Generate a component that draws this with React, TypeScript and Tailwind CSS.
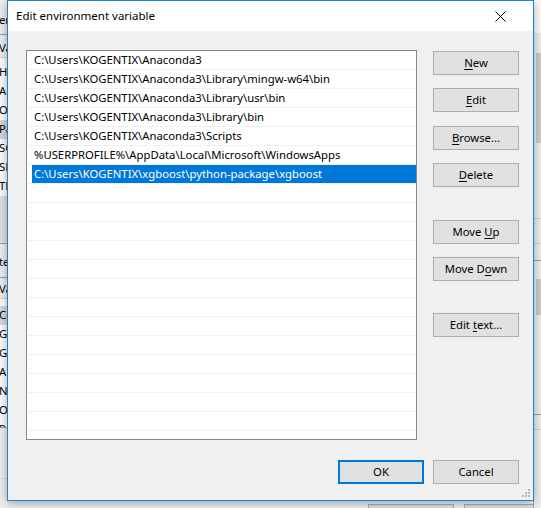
import React from 'react';

const paths = [
  'C:\\Users\\KOGENTIX\\Anaconda3',
  'C:\\Users\\KOGENTIX\\Anaconda3\\Library\\mingw-w64\\bin',
  'C:\\Users\\KOGENTIX\\Anaconda3\\Library\\usr\\bin',
  'C:\\Users\\KOGENTIX\\Anaconda3\\Library\\bin',
  'C:\\Users\\KOGENTIX\\Anaconda3\\Scripts',
  '%USERPROFILE%\\AppData\\Local\\Microsoft\\WindowsApps',
  'C:\\Users\\KOGENTIX\\xgboost\\python-package\\xgboost',
];
const selected = 6;
const rowCount = 21;

// variables listed in the window behind the dialog
const userVars = ['HADOOP_HOME', 'ANACONDA', 'OneDrive', 'Path', 'SCALA_HOME', 'SPARK_HOME', 'TEMP'];
const systemVars = ['ComSpec', 'GIT_HOME', 'GRADLE_HOME', 'ANT_HOME', 'NUMBER_OF_PROCESSORS', 'OS', 'Path'];

const Btn = ({ children, className = '' }: { children: React.ReactNode; className?: string }) => (
  <button
    className={`h-[24px] w-[86px] shrink-0 border bg-[#e1e1e1] leading-none text-black ${className}`}
  >
    {children}
  </button>
);

const Key = ({ children }: { children: React.ReactNode }) => (
  <span className="underline underline-offset-[2px]">{children}</span>
);

const App = () => {
  return (
    <div className="relative h-[508px] w-[541px] overflow-hidden bg-[#f0f0f0] font-['Noto_Sans',sans-serif] text-[11.3px] text-black">
      {/* Environment Variables window behind */}
      <div className="flex h-full">
        <div className="flex w-[7px] shrink-0 flex-col overflow-hidden whitespace-nowrap">
          <div className="ml-[-1px] h-[34px] shrink-0 pt-[12px]">er</div>
          <div className="h-px shrink-0 bg-[#a0a0a0]" />
          <div className="ml-[-1px] h-[23px] shrink-0 border-b border-[#d5d5d5] pt-[5px]">Variable</div>
          <div className="h-[5px] shrink-0 bg-white" />
          <div className="bg-white">
            {userVars.map((v, i) => (
              <div key={v} className={`ml-[-1px] h-[19px] pt-[1px] ${i === 3 ? 'bg-[#d9d9d9]' : ''}`}>{v}</div>
            ))}
          </div>
          <div className="h-[47px] shrink-0 bg-[#e3e3e3]" />
          <div className="h-px shrink-0 bg-[#a0a0a0]" />
          <div className="ml-[-1px] h-[34px] shrink-0 border-b border-[#a0a0a0] pt-[10px]">te</div>
          <div className="ml-[-1px] h-[21px] shrink-0 border-b border-[#d5d5d5] pt-[3px]">Variable</div>
          <div className="h-[128px] shrink-0 overflow-hidden bg-white pt-[7px]">
            {systemVars.map((v, i) => (
              <div key={v} className={`ml-[-1px] h-[19px] pt-[1px] ${i === 0 ? 'bg-[#d9d9d9]' : ''}`}>{v}</div>
            ))}
          </div>
          <div className="h-px shrink-0 bg-[#a0a0a0]" />
          <div className="h-[50px] shrink-0" />
          <div className="h-px shrink-0 bg-[#dadada]" />
        </div>

        <div className="flex min-w-0 flex-1 flex-col overflow-hidden">
          <div className="mt-auto mb-[-24px] flex shrink-0 gap-[10px] pl-[361px]">
            <div className="h-[28px] w-[86px] shrink-0 border border-[#adadad] bg-[#e1e1e1]" />
            <div className="h-[28px] w-[86px] shrink-0 border border-[#adadad] bg-[#e1e1e1]" />
          </div>
        </div>

        <div className="flex w-[8px] shrink-0 flex-col">
          <div className="h-[33px] shrink-0 bg-white" />
          <div className="flex flex-1 flex-col border-l border-[#a0a0a0] bg-[#f0f0f0]">
            <div className="h-[20px] shrink-0" />
            <div className="ml-[2px] h-[90px] shrink-0 bg-[#cdcdcd]" />
            <div className="h-[75px] shrink-0" />
            <div className="h-px shrink-0 bg-[#d5d5d5]" />
            <div className="h-[24px] shrink-0" />
            <div className="h-px shrink-0 bg-[#d5d5d5]" />
            <div className="h-[16px] shrink-0" />
            <div className="h-px shrink-0 bg-[#a0a0a0]" />
            <div className="h-[18px] shrink-0" />
            <div className="ml-[2px] h-[36px] shrink-0 bg-[#cdcdcd]" />
            <div className="h-[99px] shrink-0" />
            <div className="h-px shrink-0 bg-[#a0a0a0]" />
            <div className="h-[14px] shrink-0" />
            <div className="h-px shrink-0 bg-[#d5d5d5]" />
          </div>
        </div>
      </div>

      {/* Edit environment variable dialog */}
      <div className="absolute top-0 left-[7px] flex h-[501px] w-[527px] flex-col border border-[#1883d7] bg-[#f0f0f0] shadow-[0_2px_10px_rgba(0,0,0,0.35)]">
        <div className="flex h-[30px] shrink-0 items-center justify-between bg-white pl-[8px] pr-[27px]">
          <span className="text-[11.5px]">Edit environment variable</span>
          <svg width="11" height="11" viewBox="0 0 11 11">
            <path d="M0.5 0.5L10.5 10.5M10.5 0.5L0.5 10.5" stroke="#000" strokeWidth="1" fill="none" />
          </svg>
        </div>

        <div className="relative flex flex-1 flex-col">
          <div className="flex pt-[19px] pr-[14px] pl-[18px]">
            <div className="h-[390px] w-[391px] shrink-0 overflow-hidden border border-[#828790] bg-white pl-px">
              {Array.from({ length: rowCount }).map((_, i) => (
                <div key={i} className="h-[19px] border-b border-[#f0f0f0]">
                  <div
                    className={`ml-[4px] h-[18px] whitespace-nowrap pt-[2px] pl-[2px] leading-[14px] ${
                      i === selected ? 'bg-[#0078d7] text-white' : ''
                    }`}
                  >
                    {paths[i] ?? ''}
                  </div>
                </div>
              ))}
            </div>

            <div className="ml-[16px] flex flex-col">
              <Btn className="mt-px border-[#adadad]"><Key>N</Key>ew</Btn>
              <Btn className="mt-[13px] border-[#adadad]"><Key>E</Key>dit</Btn>
              <Btn className="mt-[14px] border-[#adadad]"><Key>B</Key>rowse...</Btn>
              <Btn className="mt-[13px] border-[#adadad]"><Key>D</Key>elete</Btn>
              <Btn className="mt-[33px] border-[#adadad]">Move <Key>U</Key>p</Btn>
              <Btn className="mt-[13px] border-[#adadad]">Move D<Key>o</Key>wn</Btn>
              <Btn className="mt-[32px] border-[#adadad]">Edit <Key>t</Key>ext...</Btn>
            </div>
          </div>

          <div className="mt-[20px] flex justify-end gap-[9px] pr-[14px]">
            <Btn className="border-2 border-[#0078d7]">OK</Btn>
            <Btn className="border-[#adadad]">Cancel</Btn>
          </div>

          {/* resize grip */}
          <svg className="absolute right-[2px] bottom-[2px]" width="9" height="9" viewBox="0 0 9 9">
            <rect x="6" y="0" width="2" height="2" fill="#b8b8b8" />
            <rect x="3" y="3" width="2" height="2" fill="#b8b8b8" />
            <rect x="6" y="3" width="2" height="2" fill="#b8b8b8" />
            <rect x="0" y="6" width="2" height="2" fill="#b8b8b8" />
            <rect x="3" y="6" width="2" height="2" fill="#b8b8b8" />
            <rect x="6" y="6" width="2" height="2" fill="#b8b8b8" />
          </svg>
        </div>
      </div>
    </div>
  );
};

export default App;
